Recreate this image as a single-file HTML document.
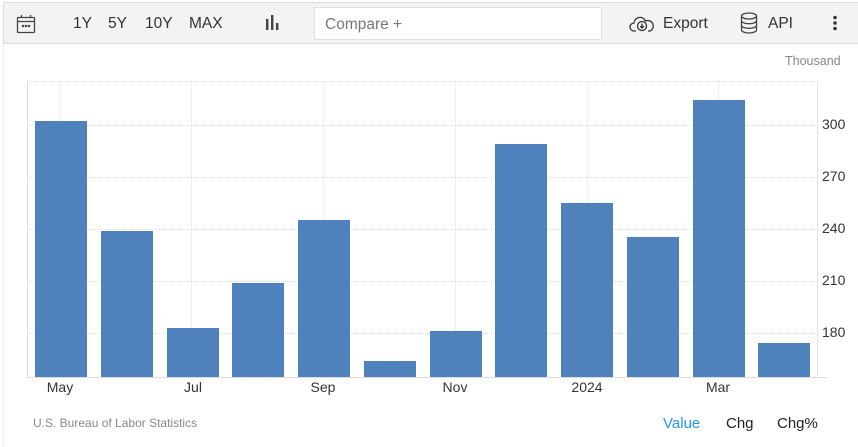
<!DOCTYPE html>
<html><head><meta charset="utf-8"><style>
*{margin:0;padding:0;box-sizing:border-box}
body{width:858px;height:447px;background:#fff;font-family:"Liberation Sans",Arial,sans-serif;position:relative;overflow:hidden}
.tb{position:absolute;left:3px;top:2px;width:855px;height:42px;background:#f3f3f3;border:1px solid #dcdcdc;border-right:none}
.t{position:absolute;font-size:15.5px;color:#333;top:15px}
.cmp{position:absolute;left:314px;top:7px;width:288px;height:33px;background:#fff;border:1px solid #e0e0e0;font-size:15.5px;color:#777;padding:8px 10px}
.side{position:absolute;left:3px;top:44px;width:1px;height:403px;background:#eee}
.bar{position:absolute;background:#4f81bd;width:52px}
.xl{position:absolute;top:379px;font-size:14px;color:#333;transform:translateX(-50%)}
.yl{position:absolute;left:822px;font-size:14px;color:#333}
.hg{position:absolute;left:27px;width:791px;border-top:1px dotted #ddd;height:0}
.vg{position:absolute;top:81px;height:296px;border-left:1px dotted #e2e2e2;width:0}
</style></head><body>
<div class="tb"></div>
<svg style="position:absolute;left:16px;top:14px" width="20" height="20" viewBox="0 0 20 20" fill="none" stroke="#444" stroke-width="1.3"><rect x="1.5" y="3.5" width="17" height="15" rx="1"/><line x1="1.5" y1="7.5" x2="18.5" y2="7.5"/><line x1="5.5" y1="1" x2="5.5" y2="4"/><line x1="14.5" y1="1" x2="14.5" y2="4"/><circle cx="7" cy="12" r=".6" fill="#444"/><circle cx="10" cy="12" r=".6" fill="#444"/><circle cx="13" cy="12" r=".6" fill="#444"/></svg>
<span class="t" style="left:73px">1Y</span>
<span class="t" style="left:108px">5Y</span>
<span class="t" style="left:145px">10Y</span>
<span class="t" style="left:189px">MAX</span>
<svg style="position:absolute;left:265px;top:15px" width="16" height="16" viewBox="0 0 16 16" fill="#444"><rect x="1" y="4" width="2.4" height="11"/><rect x="6" y="0" width="2.4" height="15"/><rect x="11" y="8" width="2.4" height="7"/></svg>
<div class="cmp">Compare +</div>
<svg style="position:absolute;left:629px;top:14px" width="26" height="20" viewBox="0 0 26 20" fill="none" stroke="#333" stroke-width="1.3"><path d="M7 17H5a4 4 0 0 1 0-8 6 6 0 0 1 11.5-2A4.5 4.5 0 0 1 21 17h-2"/><circle cx="13" cy="12" r="4.5"/><path d="M13 9.5v4M11.2 12l1.8 2 1.8-2" /></svg>
<span class="t" style="left:663px">Export</span>
<svg style="position:absolute;left:740px;top:12px" width="18" height="22" viewBox="0 0 18 22" fill="none" stroke="#444" stroke-width="1.3"><ellipse cx="9" cy="4" rx="7.5" ry="3"/><path d="M1.5 4v14c0 1.7 3.4 3 7.5 3s7.5-1.3 7.5-3V4M1.5 8.7c0 1.7 3.4 3 7.5 3s7.5-1.3 7.5-3M1.5 13.4c0 1.7 3.4 3 7.5 3s7.5-1.3 7.5-3"/></svg>
<span class="t" style="left:768px">API</span>
<svg style="position:absolute;left:832px;top:15px" width="6" height="16"><circle cx="3" cy="2.5" r="1.8" fill="#333"/><circle cx="3" cy="8" r="1.8" fill="#333"/><circle cx="3" cy="13.5" r="1.8" fill="#333"/></svg>
<div class="side"></div>
<div style="position:absolute;left:785px;top:54px;font-size:12.5px;color:#888">Thousand</div>
<div class="hg" style="top:81px"></div>
<div class="hg" style="top:125px"></div>
<div class="hg" style="top:177px"></div>
<div class="hg" style="top:229px"></div>
<div class="hg" style="top:281px"></div>
<div class="hg" style="top:333px"></div>
<div class="vg" style="left:27px;border-left:1px solid #ddd"></div>
<div class="vg" style="left:60px"></div>
<div class="vg" style="left:191px"></div>
<div class="vg" style="left:323px"></div>
<div class="vg" style="left:455px"></div>
<div class="vg" style="left:587px"></div>
<div class="vg" style="left:718px"></div>
<div style="position:absolute;left:817px;top:81px;width:1px;height:296px;background:#e3e3e3"></div>
<div style="position:absolute;left:27px;top:377px;width:800px;height:1px;background:#ddd"></div>
<div class="bar" style="left:35px;top:121px;height:256px"></div>
<div class="bar" style="left:101px;top:231px;height:146px"></div>
<div class="bar" style="left:167px;top:328px;height:49px"></div>
<div class="bar" style="left:232px;top:283px;height:94px"></div>
<div class="bar" style="left:298px;top:220px;height:157px"></div>
<div class="bar" style="left:364px;top:361px;height:16px"></div>
<div class="bar" style="left:430px;top:331px;height:46px"></div>
<div class="bar" style="left:495px;top:144px;height:233px"></div>
<div class="bar" style="left:561px;top:203px;height:174px"></div>
<div class="bar" style="left:627px;top:237px;height:140px"></div>
<div class="bar" style="left:693px;top:100px;height:277px"></div>
<div class="bar" style="left:758px;top:343px;height:34px"></div>
<div class="yl" style="top:116px">300</div>
<div class="yl" style="top:168px">270</div>
<div class="yl" style="top:220px">240</div>
<div class="yl" style="top:272px">210</div>
<div class="yl" style="top:324px">180</div>
<div class="xl" style="left:60px">May</div>
<div class="xl" style="left:193px">Jul</div>
<div class="xl" style="left:323px">Sep</div>
<div class="xl" style="left:455px">Nov</div>
<div class="xl" style="left:587px">2024</div>
<div class="xl" style="left:718px">Mar</div>
<div style="position:absolute;left:33px;top:416px;font-size:12px;color:#888">U.S. Bureau of Labor Statistics</div>
<div style="position:absolute;left:663px;top:415px;font-size:15px;color:#2196f3">Value</div>
<div style="position:absolute;left:726px;top:415px;font-size:15px;color:#222">Chg</div>
<div style="position:absolute;left:777px;top:415px;font-size:15px;color:#222">Chg%</div>
</body></html>
